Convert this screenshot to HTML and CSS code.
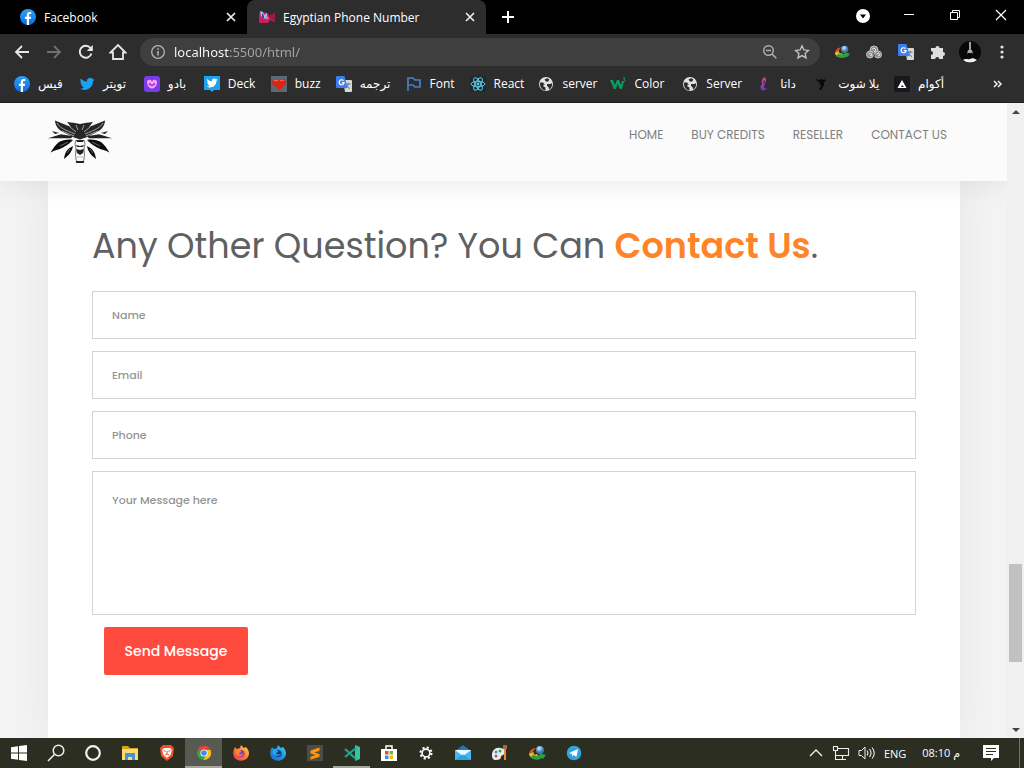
FILE: index.html
```html
<!DOCTYPE html>
<html lang="en">
<head>
<meta charset="utf-8">
<title>Egyptian Phone Number</title>
<link rel="stylesheet" href="styles.css">
</head>
<body>
<svg class="defs" aria-hidden="true">
  <defs>
    <linearGradient id="g-blue" x1="0" y1="0" x2="0" y2="1"><stop offset="0" stop-color="#2aa4f8"/><stop offset="1" stop-color="#0a6ce0"/></linearGradient>
    <linearGradient id="g-fire" x1="1" y1="0" x2="0" y2="1"><stop offset="0" stop-color="#ffe24a"/><stop offset=".5" stop-color="#ff7a2a"/><stop offset="1" stop-color="#f0306a"/></linearGradient>
    <linearGradient id="g-dev" x1="1" y1="0" x2="0" y2="1"><stop offset="0" stop-color="#3fe0f0"/><stop offset=".5" stop-color="#1e90e8"/><stop offset="1" stop-color="#1470d8"/></linearGradient>
    <linearGradient id="g-data" x1="0" y1="0" x2="0" y2="1"><stop offset="0" stop-color="#d0409a"/><stop offset="1" stop-color="#6a3ab8"/></linearGradient>
    <radialGradient id="g-globe" cx=".4" cy=".3"><stop offset="0" stop-color="#d8ecff"/><stop offset="1" stop-color="#3a78b8"/></radialGradient>
  </defs>
  <symbol id="facebook" viewBox="0 0 16 16"><circle cx="8" cy="8" r="8" fill="url(#g-blue)"/><path d="M6.800 16V10H4.900V7.800h1.900V6.300c0-2.200 1.100-3.300 2.900-3.300.7 0 1.300.1 1.500.1v2h-1c-1 0-1.200.5-1.200 1.200v1.500h2.100L10.800 10H9v6z" fill="#fff"/></symbol>
  <symbol id="bird" viewBox="0 0 16 16"><path d="M15.500 3.400c-.5.3-1.100.4-1.700.5.600-.4 1-1 1.300-1.600-.6.300-1.200.6-1.900.7A3 3 0 0 0 8 5.700C5.500 5.600 3.300 4.400 1.800 2.600c-.8 1.400-.4 3.100.9 4-.5 0-.9-.1-1.300-.4 0 1.500 1 2.700 2.400 3-.4.100-.9.100-1.300 0 .4 1.200 1.500 2.100 2.800 2.100A6 6 0 0 1 .8 12.600c5.800 3.500 13.200-.3 13.200-7.600.6-.4 1.100-1 1.500-1.600z"/></symbol>
  <symbol id="translate" viewBox="0 0 16 16"><path d="M7 4h8a1 1 0 0 1 1 1v10a1 1 0 0 1-1 1H9z" fill="#d4d8dc"/><path d="M9.500 8h5M12 7v1c0 2-1.200 3.500-2.500 4.300M10.500 9.500c.8 1.500 2 2.400 3.500 3" stroke="#69737c" fill="none"/><path d="M1 0h7.500l3 12H1a1 1 0 0 1-1-1V1a1 1 0 0 1 1-1z" fill="#3f7ef0"/><path d="M7.500 4.600a2.500 2.500 0 1 0 .6 2H5.800" stroke="#fff" stroke-width="1.200" fill="none"/></symbol>
  <symbol id="globe" viewBox="0 0 16 16"><circle cx="8" cy="8" r="7" fill="#e2e2e2"/><path d="M2 6.500h3l2 2H5.500v2l2 1v3C4 14 1.500 11 2 6.500zM6.500 3.500L9 2.200l2 .8v1.500L9 6 7.500 5zM9 8h3l2-.8c.5 3-.8 5-3 6.300l-.5-2.500L9 10z" fill="#2d2d2d"/></symbol>
  <symbol id="idm" viewBox="0 0 18 16"><path d="M1 10c0-4 3-7 7-7-2 2-4 4-3 6z" fill="#e8502a"/><path d="M1 9c1 5 6 6 10 3l-2-3c-3 1.500-4 0-3-2z" fill="#f2c61c"/><circle cx="12" cy="5" r="4" fill="url(#g-globe)"/><path d="M4 9c2 2 5 2 8 1l-1-2 7 2-3 4-1-1c-4 3-10 2-12-2 2 1 3 0 2-2z" fill="#2f9e3c"/></symbol>
  <symbol id="close" viewBox="0 0 12 12"><path d="M2 2l8 8M10 2l-8 8" stroke="#eee" stroke-width="1.700"/></symbol>
</svg>

<header class="browser">
  <div class="tabs">
    <div class="tab"><svg class="i16"><use href="#facebook"/></svg><span class="tab-title">Facebook</span><button class="tab-close" aria-label="Close Facebook"><svg class="i12"><use href="#close"/></svg></button></div>
    <div class="tab tab-active"><svg class="i16" viewBox="0 0 16 16"><path d="M0 4l5-1 5 2v3l6-4v9l-5-2-2 3H0z" fill="#c81e5a"/><path d="M11 6l5-2v8l-5-2z" fill="#971b4c"/><path d="M1 2l3 1 1 3 3-2v4l-3 2-3-3z" fill="#8fc8ff"/><path d="M3 4l2 3v3l-2-2z" fill="#5b2a9a"/><circle cx="8" cy="9" r="1.500" fill="#ff6aa8"/></svg><span class="tab-title">Egyptian Phone Number</span><button class="tab-close" aria-label="Close Egyptian Phone Number"><svg class="i12"><use href="#close"/></svg></button></div>
    <button class="new-tab" aria-label="New tab"><svg class="i16" viewBox="0 0 16 16"><path d="M8 2v12M2 8h12" stroke="#fff" stroke-width="2"/></svg></button>
    <div class="window-controls">
      <button aria-label="Search tabs"><svg class="i16" viewBox="0 0 16 16"><circle cx="8" cy="9" r="7" fill="#fff"/><path d="M5 7.500h6l-3 4z" fill="#000"/></svg></button>
      <button aria-label="Minimize"><svg class="i16" viewBox="0 0 16 16"><path d="M3 7.500h10" stroke="#fff"/></svg></button>
      <button aria-label="Restore"><svg class="i16" viewBox="0 0 16 16"><path d="M3.500 5.500h7v7h-7zM5.500 5V3.500h7v7H11" fill="none" stroke="#fff"/></svg></button>
      <button aria-label="Close"><svg class="i16" viewBox="0 0 16 16"><path d="M3 3l10 10M13 3L3 13" stroke="#fff" stroke-width="1.200"/></svg></button>
    </div>
  </div>
  <div class="toolbar">
    <div class="tools">
      <button aria-label="Back"><svg class="i16" viewBox="0 0 16 16"><path d="M15 8H2M8 2L2 8l6 6" fill="none" stroke="#e6e6e6" stroke-width="1.800"/></svg></button>
      <button aria-label="Forward"><svg class="i16" viewBox="0 0 16 16"><path d="M1 8h13M8 2l6 6-6 6" fill="none" stroke="#707070" stroke-width="1.800"/></svg></button>
      <button aria-label="Reload"><svg class="i16" viewBox="0 0 16 16"><path d="M13.500 9.500A6 6 0 1 1 12.500 4" fill="none" stroke="#e6e6e6" stroke-width="1.900"/><path d="M14.800 1v6H8.800z" fill="#e6e6e6"/></svg></button>
      <button aria-label="Home"><svg class="i18" viewBox="0 0 18 18"><path d="M1.500 9.500L9 2l7.500 7.500H14V16H4V9.500z" fill="none" stroke="#e6e6e6" stroke-width="1.800"/></svg></button>
    </div>
    <div class="omnibox">
      <svg class="i16" viewBox="0 0 16 16"><circle cx="8" cy="8" r="6.300" fill="none" stroke="#b4b4b4" stroke-width="1.300"/><path d="M8 7v4.500M8 4.200v1.600" stroke="#b4b4b4" stroke-width="1.600"/></svg>
      <input class="address" type="text" aria-label="Address" value="localhost:5500/html/">
      <button aria-label="Zoom"><svg class="i16" viewBox="0 0 16 16"><circle cx="6.500" cy="6.500" r="4.800" fill="none" stroke="#b0b0b0" stroke-width="1.400"/><path d="M4 6.500h5M10 10l4.300 4.300" stroke="#b0b0b0" stroke-width="1.500"/></svg></button>
      <button aria-label="Bookmark"><svg class="i16" viewBox="0 0 16 16"><path d="M8 1.800l1.900 4.100 4.500.5-3.300 3 .9 4.500-4-2.300-4 2.300.9-4.500-3.300-3 4.500-.5z" fill="none" stroke="#c8c8c8" stroke-width="1.300"/></svg></button>
    </div>
    <div class="tools">
      <button aria-label="Download manager"><svg class="i16"><use href="#idm"/></svg></button>
      <button aria-label="Cookies"><svg class="i16" viewBox="0 0 16 16"><g fill="#8c8c8c" stroke="#c4c4c4"><circle cx="8" cy="6" r="4"/><circle cx="4" cy="10.500" r="3.500"/><circle cx="12" cy="10.500" r="3.500"/></g><path d="M6 5l2-1 2 2-2 2M2.500 10l2-1 1.500 2-2 1M10.500 10l2-1 1.500 2-2 1" fill="none" stroke="#e4e4e4"/><path d="M7 9l2 3" stroke="#444"/></svg></button>
      <button aria-label="Translate"><svg class="i16"><use href="#translate"/></svg></button>
      <button aria-label="Extensions"><svg class="i16" viewBox="0 0 16 16"><path d="M1 4h4.500a2 2 0 1 1 4 0H13v4a2 2 0 1 1 0 4v3H9.200a2 2 0 1 0-4 0H1v-4a2 2 0 1 0 0-4z" fill="#dedede"/></svg></button>
      <button aria-label="Profile"><svg class="i22" viewBox="0 0 22 22"><circle cx="11" cy="11" r="11" fill="#080808"/><path d="M11 1v8" stroke="#c8c8c8" stroke-width="1.600"/><path d="M9 9h4l1 4-1-1H9l-1 1z" fill="#aaa"/><path d="M4 19c3-2 5 0 7-1s4-1 7 1a11 11 0 0 1-14 0z" fill="#eee"/></svg></button>
      <button aria-label="Menu"><svg class="i16" viewBox="0 0 16 16"><g fill="#e2e2e2"><circle cx="8" cy="3" r="1.600"/><circle cx="8" cy="8" r="1.600"/><circle cx="8" cy="13" r="1.600"/></g></svg></button>
    </div>
  </div>
  <nav class="bookmarks" aria-label="Bookmarks">
    <a href="#"><svg class="i16"><use href="#facebook"/></svg><span lang="ar">فيس</span></a>
    <a href="#"><svg class="i16" fill="#1da1f2"><use href="#bird"/></svg><span lang="ar">تويتر</span></a>
    <a href="#"><svg class="i16" viewBox="0 0 16 16"><rect width="16" height="16" rx="3" fill="#783bf0"/><path d="M3 6c0-3 4-3 5-.8C9 3 13 3 13 6c0 4-2.500 6.500-5 6.500S3 10 3 6z" fill="#ff9bea"/><path d="M5.500 7c.3 3 4.700 3 5 0" fill="none" stroke="#783bf0" stroke-width="1.500"/></svg><span lang="ar">بادو</span></a>
    <a href="#"><svg class="i16" viewBox="0 0 16 16"><path d="M0 0h16v14h-6l-2 2-2-2H0z" fill="#1da1f2"/><svg x="2" y="1" width="12" height="12" fill="#fff"><use href="#bird"/></svg></svg><span>Deck</span></a>
    <a href="#"><svg class="i16" viewBox="0 0 16 16"><path d="M0 0h16v16H0z" fill="#596a75"/><path d="M8 14L1 8c-1-4 3-6 7-4 4-2 8-1 7 3-1 3-4 5-7 7z" fill="#dc2315"/><path d="M3 5c1-1 3-1 4 0M9 5c2-1 3-1 4 0" stroke="#f67b56" fill="none"/></svg><span>buzz</span></a>
    <a href="#"><svg class="i16"><use href="#translate"/></svg><span lang="ar">ترجمه</span></a>
    <a href="#"><svg class="i16" viewBox="0 0 16 16"><path d="M2 15V2h5l2 2h5v7H9L7 9H2" fill="none" stroke="#4a80c8" stroke-width="1.700"/></svg><span>Font</span></a>
    <a href="#"><svg class="i16" viewBox="0 0 16 16"><path d="M0 0h16v16H0z" fill="#20262a"/><g fill="none" stroke="#5ccde8"><ellipse cx="8" cy="8" rx="7" ry="2.700"/><ellipse cx="8" cy="8" rx="7" ry="2.700" transform="rotate(60 8 8)"/><ellipse cx="8" cy="8" rx="7" ry="2.700" transform="rotate(120 8 8)"/></g><circle cx="8" cy="8" r="1.400" fill="#5ccde8"/></svg><span>React</span></a>
    <a href="#"><svg class="i16"><use href="#globe"/></svg><span>server</span></a>
    <a href="#"><svg class="i16" viewBox="0 0 16 16"><path d="M0 4h3l2 5 2-5h2l2 5 1-4h2l-2 8h-2L7.500 8 6 13H4z" fill="#0c9a65"/><path d="M13 2h2l-1 1.500c2 .5 1 2.500-1 2" fill="none" stroke="#0c9a65"/></svg><span>Color</span></a>
    <a href="#"><svg class="i16"><use href="#globe"/></svg><span>Server</span></a>
    <a href="#"><svg class="i16" viewBox="0 0 16 16"><path d="M9 1c-3 1-4 4-3 7-2 2-2 5 0 6 2 1 4 0 5-2-2 1-3 0-3-1 0-3 4-6 1-10zM8.500 4c1 2 0 3-1 4 0-1 0-3 1-4z" fill="url(#g-data)" fill-rule="evenodd"/></svg><span lang="ar">داتا</span></a>
    <a href="#"><svg class="i16" viewBox="0 0 16 16"><path d="M1 3l4 1 3-1 2 1 1-1 1 2-2 1 0 3-3 5H5l2-4-2-4z" fill="#080808"/></svg><span lang="ar">يلا شوت</span></a>
    <a href="#"><svg class="i16" viewBox="0 0 16 16"><rect width="16" height="16" rx="2" fill="#17181b"/><path d="M8 4l4.500 8h-9zM8 9l-1 2h3z" fill="#fff" fill-rule="evenodd"/></svg><span lang="ar">أكوام</span></a>
    <button class="more" aria-label="More bookmarks"><svg class="i12" viewBox="0 0 12 12"><path d="M2 3l3 3-3 3M6 3l3 3-3 3" fill="none" stroke="#e8e8e8" stroke-width="1.600"/></svg></button>
  </nav>
</header>

<div class="viewport">
  <div class="site">
    <header class="site-header">
      <a class="logo" href="#" aria-label="Home page"><svg viewBox="0 0 64 46">
        <g id="half">
          <path d="M32 5l-5-1-8-1 4 5L7 1.500c0 5 4 10 9 12l10 5 6 2z" fill="#262626"/>
          <path d="M9 4c3 5 8 7 18 11M14 12l12 5M22 8l6 5M28 6l2 5" stroke="#a4a4a4" fill="none"/>
          <path d="M4 12l7 2-4 1zM0 19.300l13-4 12 2-2 2z" fill="#222"/>
          <path d="M25 21c-5-1-10 0-14 2-4 3-6 7-8.500 10.500C7 31 10 31 14 29c4-2 8-5 11-8zM25 27c-6 3-8 6-9 13 4-3 8-7 9-13z" fill="#0c0c0c"/>
          <path d="M12 27l8-4M19 34l3-4" stroke="#666" fill="none"/>
          <path d="M28 21l-1 4 1 5-.5 6 1 7" stroke="#777" fill="none"/>
          <path d="M28 21h4v2h-3zM28 26l4 1v1h-3zM28 30l4 1v5l-3-2zM28 42h4v2h-4z" fill="#222"/>
          <path d="M29 38h3" stroke="#bbb"/>
        </g>
        <use href="#half" transform="matrix(-1 0 0 1 64 0)"/>
      </svg></a>
      <nav class="site-nav" aria-label="Main">
        <a href="#">HOME</a><a href="#">BUY CREDITS</a><a href="#">RESELLER</a><a href="#">CONTACT US</a>
      </nav>
    </header>
    <main class="card">
      <h1>Any Other Question? You Can <strong>Contact Us</strong>.</h1>
      <form class="contact">
        <input type="text" placeholder="Name" aria-label="Name">
        <input type="email" placeholder="Email" aria-label="Email">
        <input type="tel" placeholder="Phone" aria-label="Phone">
        <textarea placeholder="Your Message here" aria-label="Your Message here"></textarea>
        <button type="button">Send Message</button>
      </form>
    </main>
  </div>
  <div class="scrollbar">
    <svg class="arrow" viewBox="0 0 17 17"><path d="M5 11l4-4 4 4z" fill="#444"/></svg>
    <div class="track"><div class="thumb"></div></div>
    <svg class="arrow" viewBox="0 0 17 17"><path d="M5 7h8l-4 4z" fill="#444"/></svg>
  </div>
</div>

<footer class="taskbar">
  <div class="apps">
    <button aria-label="Start"><svg class="i18" viewBox="0 0 18 18"><path d="M1 3.200l7-1v6.300H1zM9 2l8-1v7.500H9zM1 9.500h7v6.300l-7-1zM9 9.500h8V17l-8-1z" fill="#fff"/></svg></button>
    <button aria-label="Search"><svg class="i18" viewBox="0 0 18 18"><circle cx="11.500" cy="6.500" r="5.300" fill="none" stroke="#eee" stroke-width="1.500"/><path d="M7.700 10.300L1 17" stroke="#eee" stroke-width="1.600"/></svg></button>
    <button aria-label="Cortana"><svg class="i18" viewBox="0 0 18 18"><circle cx="9" cy="9" r="6.800" fill="none" stroke="#f2f2f2" stroke-width="2.200"/></svg></button>
    <button aria-label="File Explorer"><svg class="i18" viewBox="0 0 18 18"><path d="M1 2h6l2 2h8v3H1z" fill="#d9a018"/><path d="M1 5h16v11H1z" fill="#fadb72"/><path d="M4 9h10v7h-3v-3H7v3H4z" fill="#4692d8"/></svg></button>
    <button aria-label="Brave"><svg class="i18" viewBox="0 0 18 18"><path d="M5 1h8l3 3-1 8-6 5-6-5-1-8z" fill="#f0502a"/><path d="M6 4h6l2 2-1.500 5L9 14l-3.500-3L4 6z" fill="#fff"/><path d="M5.500 6.500l2 1M12.500 6.500l-2 1M9 7v3M7 11l2-1 2 1" stroke="#f0502a" fill="none"/></svg></button>
    <button class="active" aria-label="Chrome"><svg class="i18" viewBox="0 0 18 18"><circle cx="9" cy="9" r="7" fill="#35a352"/><path d="M3 5.300A7 7 0 0 1 15.500 6H9L6 10z" fill="#e54335"/><path d="M9 6h6.400A7 7 0 0 1 8.500 16l3.500-6z" fill="#fbc11a"/><circle cx="9" cy="9" r="3.600" fill="#fff"/><circle cx="9" cy="9" r="2.800" fill="#4285f4"/></svg></button>
    <button aria-label="Firefox"><svg class="i18" viewBox="0 0 18 18"><path d="M2 5l1-2 2 2 3-1 1-3 3 3 2-1c3 3 4 7 2 10-3 5-11 5-14 0-1-3-1-5 0-8z" fill="url(#g-fire)"/><circle cx="9" cy="9.500" r="3.600" fill="#8b3cc8"/><path d="M4 6c3-1 5 0 5 2L7 9c0 2 3 2 5 0-1 4-7 4-8 0z" fill="#ff8a2a"/></svg></button>
    <button aria-label="Firefox Developer Edition"><svg class="i18" viewBox="0 0 18 18"><path d="M2 5l1-2 2 2 3-1 1-3 3 3 2-1c3 3 4 7 2 10-3 5-11 5-14 0-1-3-1-5 0-8z" fill="url(#g-dev)"/><circle cx="9" cy="9.500" r="3.600" fill="#143a78"/><path d="M4 6c3-1 5 0 5 2L7 9c0 2 3 2 5 0-1 4-7 4-8 0z" fill="#25a8f0"/></svg></button>
    <button aria-label="Sublime Text"><svg class="i18" viewBox="0 0 18 18"><path d="M1 1h16v16H1z" fill="#4b4b4b"/><path d="M4.500 6.500l9-3v3.200L8.500 8.500l5 1.500v2.800l-9 3v-3l5-1.700-5-1.600z" fill="#ff9800"/></svg></button>
    <button class="running" aria-label="Visual Studio Code"><svg class="i18" viewBox="0 0 18 18"><path d="M12 1l5 2v12l-5 2z" fill="#35c4a0"/><path d="M13 4L2 13M2 5l11 10" stroke="#1fa687" stroke-width="2.200"/></svg></button>
    <button aria-label="Store"><svg class="i18" viewBox="0 0 18 18"><path d="M6 6V2h6v4" fill="none" stroke="#fff" stroke-width="1.500"/><path d="M1 5h16v12H1z" fill="#fff"/><path d="M5 7h3.500v3.500H5z" fill="#e5532d"/><path d="M9.500 7H13v3.500H9.500z" fill="#7ab82a"/><path d="M5 11.500h3.500V15H5z" fill="#2a9be0"/><path d="M9.500 11.500H13V15H9.500z" fill="#f4b71c"/></svg></button>
    <button aria-label="Settings"><svg class="i18" viewBox="0 0 18 18"><circle cx="9" cy="9" r="3.900" fill="none" stroke="#fff" stroke-width="1.600"/><circle cx="9" cy="9" r="5.500" fill="none" stroke="#fff" stroke-width="2" stroke-dasharray="2.160 2.160"/></svg></button>
    <button aria-label="Mail"><svg class="i18" viewBox="0 0 18 18"><path d="M1 7l8-6 8 6v9H1z" fill="#1679c8"/><path d="M1 6h16v10H1z" fill="#45b8f2"/><path d="M1 6h16l-8 6z" fill="#f2f8fc"/><path d="M1 16l8-6 8 6z" fill="#1992dc" opacity=".6"/></svg></button>
    <button aria-label="Paint"><svg class="i18" viewBox="0 0 18 18"><path d="M1 11c0-5 4-8 8-7 4 0 6 3 4 6-1 2-3 1-3 3s-2 3-5 3-4-2-4-5z" fill="#e8eef2"/><circle cx="5" cy="8" r="1.500" fill="#3a9ad8"/><circle cx="9" cy="7" r="1.500" fill="#4a9a48"/><circle cx="5" cy="12" r="1.500" fill="#d85038"/><path d="M14 1v15" stroke="#e98a32" stroke-width="2"/><path d="M12 1h4v4h-4z" fill="#a66a42"/></svg></button>
    <button aria-label="Internet Download Manager"><svg class="i18"><use href="#idm"/></svg></button>
    <button aria-label="Telegram"><svg class="i18" viewBox="0 0 18 18"><circle cx="9" cy="9" r="7.300" fill="#2ca5de"/><path d="M4 9l9-4-1.500 8-3-2-1.500 1.500V10z" fill="#fff"/></svg></button>
  </div>
  <div class="tray">
    <svg class="i16" viewBox="0 0 16 16"><path d="M2 11l6-6 6 6" fill="none" stroke="#eee" stroke-width="1.400"/></svg>
    <svg class="i18" viewBox="0 0 18 18"><path d="M6 4.500h10.500v7H4M10.500 12v3.500M6 15.500h8M1.500 2.500h4v4h-4zM3.500 6.500v9H6" fill="none" stroke="#eee" stroke-width="1.100"/></svg>
    <svg class="i18" viewBox="0 0 18 18"><path d="M1 6.500h2.500L7 3v12l-3.500-3.500H1z" fill="none" stroke="#eee"/><path d="M9 6.500q1.800 2.500 0 5M11.500 5q3 4 0 8M14 3.500q4.500 5.500 0 11" fill="none" stroke="#eee" stroke-width="1.100"/></svg>
    <span class="lang">ENG</span>
    <span class="clock" dir="ltr">08:10 <span lang="ar">م</span></span>
    <svg class="i18 notes" viewBox="0 0 18 18"><path d="M1 1h16v13h-5l-3 3v-3H1z" fill="#fff"/><path d="M4 4.500h10M4 7.500h10M4 10.500h7" stroke="#2c2e22"/></svg>
  </div>
</footer>
</body>
</html>
```
FILE: styles.css
```css
* { box-sizing: border-box; }

body {
  margin: 0;
  height: 100vh;
  display: flex;
  flex-direction: column;
  overflow: hidden;
  font-family: "Open Sans", "Noto Sans", "DejaVu Sans", sans-serif;
  font-size: 12px;
  color: #fff;
}

button { padding: 0; border: 0; background: none; font: inherit; color: inherit; }
a { color: inherit; text-decoration: none; }
svg { display: block; flex: none; }
.defs { position: absolute; width: 0; height: 0; }
.i12 { width: 12px; height: 12px; }
.i16 { width: 16px; height: 16px; }
.i18 { width: 18px; height: 18px; }
.i22 { width: 22px; height: 22px; }

/* Browser window */
.browser { flex: none; background: #2d2d2d; border-bottom: 1px solid #1c1c1c; }

.tabs { display: flex; height: 34px; padding-left: 8px; background: #000; }
.tab { display: flex; align-items: center; gap: 8px; flex: 0 1 239px; padding: 0 10px 0 12px; }
.tab-active { background: #2d2d2d; border-radius: 8px 8px 0 0; }
.tab-title { flex: 1; white-space: nowrap; }
.new-tab { display: grid; place-items: center; width: 44px; }
.window-controls { display: flex; align-items: center; margin-left: auto; height: 30px; }
.window-controls button { display: grid; place-items: center; width: 46px; }

.toolbar { display: flex; align-items: center; height: 36px; }
.tools { display: flex; padding: 0 6px; }
.tools button { display: grid; place-items: center; width: 32px; height: 28px; }
.omnibox {
  flex: 1;
  display: flex;
  align-items: center;
  gap: 8px;
  height: 28px;
  padding: 0 10px;
  border-radius: 14px;
  background: #3f3f3f;
}
.omnibox button { margin-left: 8px; }
.address {
  flex: 1;
  min-width: 0;
  padding: 0;
  border: 0;
  outline: 0;
  font: 13px/20px "Noto Sans", "Open Sans", sans-serif;
  color: transparent;
  background: linear-gradient(90deg, #fff 56px, #a6a6a6 56px);
  -webkit-background-clip: text;
  background-clip: text;
}

.bookmarks {
  display: grid;
  grid-template-columns: 65fr 65fr 60fr 67fr 65fr 70fr 64fr 69fr 72fr 72fr 74fr 58fr 80fr 98fr 16fr;
  align-items: center;
  height: 32px;
  padding: 0 16px 4px 14px;
}
.bookmarks a { display: flex; align-items: center; gap: 8px; white-space: nowrap; }
.bookmarks span, .clock span { line-height: 16px; }

/* Page */
.viewport { flex: 1; min-height: 0; display: flex; }
.site { flex: 1; display: flex; flex-direction: column; background: #f3f3f3; font-family: Poppins, Inter, sans-serif; color: #5f6062; overflow: hidden; }
.site-header {
  position: relative;
  z-index: 1;
  flex: none;
  display: flex;
  justify-content: space-between;
  align-items: flex-start;
  height: 78px;
  padding: 16px 60px 0 48px;
  background: #fbfbfb;
  box-shadow: 0 0 30px rgba(0, 0, 0, 0.1);
}
.logo svg { width: 64px; height: 46px; }
.site-nav { display: flex; gap: 28px; font-size: 12px; line-height: 32px; color: #808080; }
.card {
  flex: 1;
  margin: 0 47px 0 48px;
  padding: 40px 44px 0;
  background: #fff;
  box-shadow: 0 0 40px rgba(0, 0, 0, 0.06);
}
h1 { margin: 0 0 20px; font-size: 35px; line-height: 50px; font-weight: 400; white-space: nowrap; }
h1 strong { font-weight: 600; color: #ff8427; }
.contact { display: flex; flex-direction: column; gap: 12px; }
.contact input, .contact textarea {
  width: 100%;
  height: 48px;
  padding: 0 19px;
  border: 1px solid #d4d4d4;
  background: #fff;
  font: 500 11px/16px Poppins, Inter, sans-serif;
  color: #555;
}
.contact textarea { height: 144px; padding: 20px 19px; resize: none; }
.contact ::placeholder { color: #959595; opacity: 1; }
.contact button {
  align-self: flex-start;
  width: 144px;
  height: 48px;
  margin-left: 12px;
  border-radius: 2px;
  background: #ff4b3e;
  color: #fff;
  font-size: 14px;
  font-weight: 500;
}

.scrollbar { flex: none; width: 17px; display: flex; flex-direction: column; background: #f0f0f0; }
.arrow { width: 17px; height: 17px; }
.track { flex: 1; display: flex; flex-direction: column; justify-content: flex-end; padding: 0 2px 59px; }
.thumb { height: 18%; background: #c1c1c1; }

/* Taskbar */
.taskbar { flex: none; display: flex; justify-content: space-between; height: 30px; background: #2c2e22; }
.apps { display: flex; }
.apps button { display: grid; place-items: center; width: 37px; border-bottom: 2px solid transparent; padding-top: 2px; }
.apps .active { background: #565a51; border-color: #a4a6a0; }
.apps .running { border-color: #a4a6a0; }
.tray { display: flex; align-items: center; gap: 8px; margin-right: 4px; padding-right: 19px; border-right: 1px solid #70726a; font-size: 11px; }
.clock { padding: 0 14px 0 8px; white-space: nowrap; }
```
